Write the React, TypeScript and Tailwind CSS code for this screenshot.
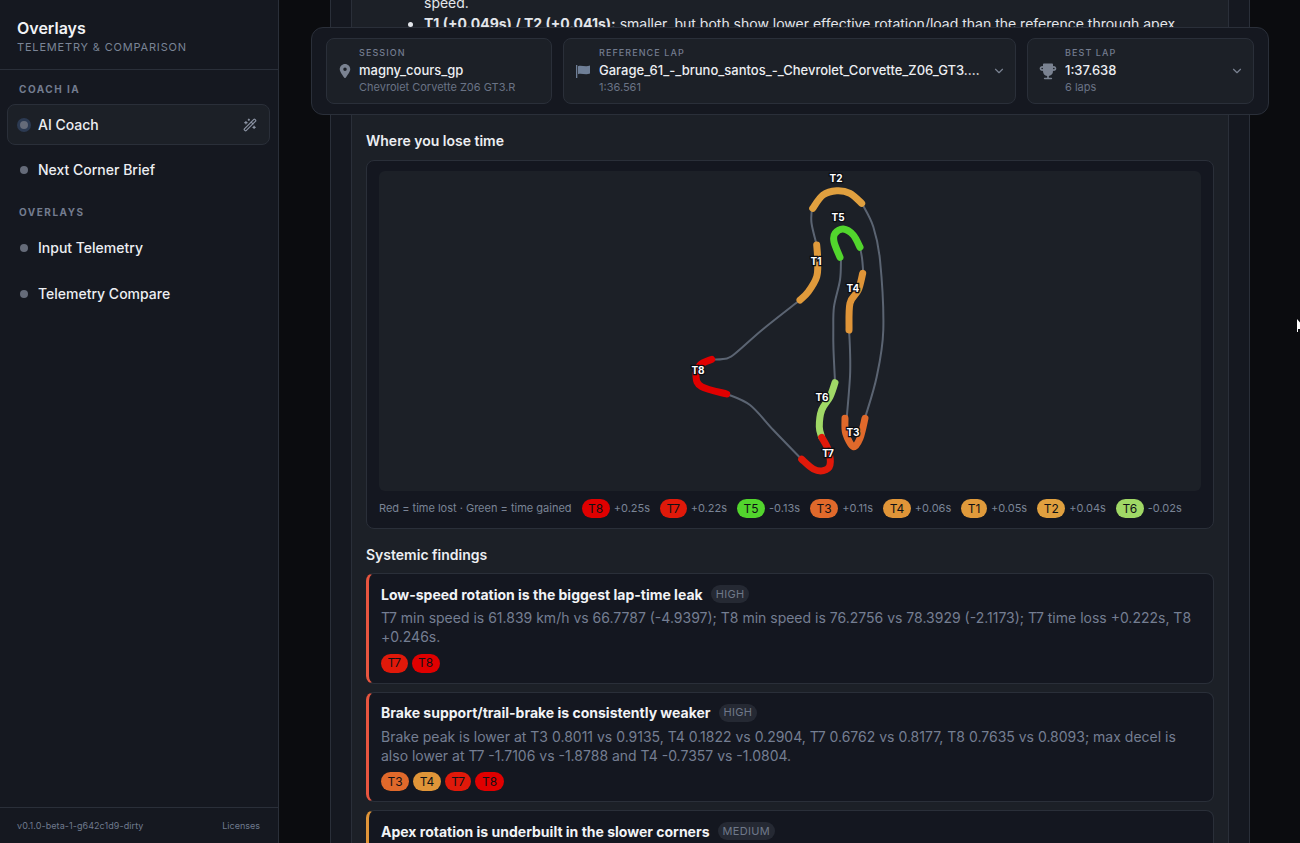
import React from "react";
import { ChevronDown, WandSparkles } from "lucide-react";
import { TbTrophyFilled } from "react-icons/tb";
import { FaLocationDot } from "react-icons/fa6";

type P = [number, number];
const OX = 379;
const OY = 171;

function curve(pts: P[]): string {
  const p = pts.map(([x, y]) => [x - OX, y - OY] as P);
  let d = `M${p[0][0].toFixed(1)} ${p[0][1].toFixed(1)}`;
  for (let i = 0; i < p.length - 1; i++) {
    const a = p[Math.max(0, i - 1)];
    const b = p[i];
    const c = p[i + 1];
    const e = p[Math.min(p.length - 1, i + 2)];
    const c1: P = [b[0] + (c[0] - a[0]) / 6, b[1] + (c[1] - a[1]) / 6];
    const c2: P = [c[0] - (e[0] - b[0]) / 6, c[1] - (e[1] - b[1]) / 6];
    d += ` C${c1[0].toFixed(1)} ${c1[1].toFixed(1)} ${c2[0].toFixed(1)} ${c2[1].toFixed(1)} ${c[0].toFixed(1)} ${c[1].toFixed(1)}`;
  }
  return d;
}

const C = {
  T1: "#e09a3b",
  T2: "#e0a03f",
  T3: "#e0692b",
  T4: "#e09538",
  T5: "#52d52d",
  T6: "#a0d866",
  T7: "#e0190a",
  T8: "#e00000",
};

const greys: P[][] = [
  [[812, 208], [811.5, 223], [816.7, 245]],
  [[800, 300], [762, 330], [733.3, 355], [723, 359], [712, 359.5]],
  [[727, 394], [750, 405], [773.3, 430], [801.7, 459.3]],
  [[835, 382], [833.5, 350], [833.3, 330], [834, 306.7], [840, 280], [841, 258]],
  [[860, 247], [862, 258], [863.3, 273]],
  [[849, 330], [850, 350], [850, 376.7], [846.7, 418]],
  [[865, 418], [876.7, 376.7], [883.3, 330], [880, 260], [873.3, 226.7], [861.7, 203]],
];

const segs: { c: string; pts: P[] }[] = [
  { c: C.T8, pts: [[711.7, 359.3], [700, 365], [696, 376.7], [701.7, 386.7], [726.7, 394]] },
  { c: C.T2, pts: [[812.7, 208.3], [823, 195], [836.7, 190.7], [850, 193.3], [861.7, 203.3]] },
  { c: C.T1, pts: [[816.7, 245], [817.7, 260], [816.7, 276.7], [808.3, 291.7], [800, 300]] },
  { c: C.T5, pts: [[840, 257.3], [834, 241.7], [835, 233.3], [843.3, 229], [853.3, 235], [860, 247.3]] },
  { c: C.T4, pts: [[862.7, 273.3], [858.3, 290], [850, 303.3], [849, 330]] },
  { c: C.T3, pts: [[845, 418.3], [845.7, 433.3], [853.3, 446.7], [860, 438.3], [865, 418.3]] },
  { c: C.T6, pts: [[821.7, 437.3], [819.3, 426.7], [821.7, 410], [830, 396.7], [835, 382.7]] },
  { c: C.T7, pts: [[801.7, 459.3], [813.3, 469], [823.3, 470.7], [830, 465], [828.3, 450], [821.7, 437.3]] },
];

const labels: [string, number, number][] = [
  ["T2", 836, 178],
  ["T5", 838, 217],
  ["T1", 816, 261],
  ["T4", 853, 288],
  ["T8", 698, 370],
  ["T6", 822, 397],
  ["T3", 853, 432],
  ["T7", 828, 453],
];

function TrackMap() {
  return (
    <svg viewBox="0 0 822 320" className="block w-full h-[320px]">
      {greys.map((g, i) => (
        <path key={i} d={curve(g)} fill="none" stroke="#5b6472" strokeWidth={2} strokeLinecap="round" />
      ))}
      {segs.map((s, i) => (
        <path key={i} d={curve(s.pts)} fill="none" stroke={s.c} strokeWidth={7} strokeLinecap="round" />
      ))}
      {labels.map(([t, x, y]) => (
        <text
          key={t}
          x={x - OX}
          y={y - OY}
          textAnchor="middle"
          dominantBaseline="central"
          fill="#ffffff"
          stroke="#0b0d12"
          strokeWidth={2.5}
          fontSize={10}
          fontWeight={700}
          style={{ paintOrder: "stroke" }}
        >
          {t}
        </text>
      ))}
    </svg>
  );
}

function Dot({ active }: { active?: boolean }) {
  return (
    <span className={`flex items-center justify-center w-[14px] h-[14px] rounded-full shrink-0 ${active ? "bg-[#2c3a52]" : ""}`}>
      <span className="block w-2 h-2 rounded-full bg-[#656b79]" />
    </span>
  );
}

function NavItem({ label, active, extra }: { label: string; active?: boolean; extra?: boolean }) {
  return (
    <div
      className={`flex items-center h-[41px] pl-[9px] pr-[12px] gap-[7px] rounded-lg border ${
        active ? "bg-[#1c2027] border-[#2a2f39]" : "border-transparent"
      }`}
    >
      <Dot active={active} />
      <span className="text-[14px] font-medium text-[#eceef2] flex-1">{label}</span>
      {extra && <WandSparkles size={14} className="text-[#8b93a3]" />}
    </div>
  );
}

function SectionLabel({ children }: { children: React.ReactNode }) {
  return <div className="text-[10px] font-bold tracking-[0.15em] leading-[12px] text-[#737c8f] px-[12px]">{children}</div>;
}

function Sidebar() {
  return (
    <aside className="w-[279px] shrink-0 h-full bg-[#151820] border-r border-[#2a2f39] flex flex-col">
      <div className="h-[70px] border-b border-[#2a2f39] pl-[17px] pt-[18px]">
        <div className="text-[16px] leading-[20px] font-semibold text-[#f1f3f6]">Overlays</div>
        <div className="text-[11px] leading-[14px] mt-[2px] tracking-[0.075em] text-[#7a8496]">TELEMETRY &amp; COMPARISON</div>
      </div>
      <div className="flex-1 pl-[7px] pr-[8px] pt-[13px]">
        <SectionLabel>COACH IA</SectionLabel>
        <div className="mt-[9px] flex flex-col gap-[4px]">
          <NavItem label="AI Coach" active extra />
          <NavItem label="Next Corner Brief" />
        </div>
        <div className="mt-[16px]">
          <SectionLabel>OVERLAYS</SectionLabel>
        </div>
        <div className="mt-[9px] flex flex-col gap-[5px]">
          <NavItem label="Input Telemetry" />
          <NavItem label="Telemetry Compare" />
        </div>
      </div>
      <div className="h-[36px] border-t border-[#2a2f39] pl-[17px] pr-[18px] flex items-center justify-between text-[9px] text-[#6f7a8e]">
        <span className="tracking-[0.008em]">v0.1.0-beta-1-g642c1d9-dirty</span>
        <span>Licenses</span>
      </div>
    </aside>
  );
}

function FlagIcon() {
  return (
    <svg width="14" height="13" viewBox="0 0 14 13" className="text-[#6f7f97]">
      <rect x="0" y="0" width="1.3" height="13" fill="currentColor" />
      <path d="M2 1.2 C5 -0.4 9 2.4 14 0.6 V8.6 C9 10.4 5 7.6 2 9.2 Z" fill="currentColor" />
    </svg>
  );
}

function Selector({
  label,
  value,
  sub,
  icon,
  chevron,
}: {
  label: string;
  value: string;
  sub: string;
  icon: React.ReactNode;
  chevron?: boolean;
}) {
  return (
    <div className="h-[66px] bg-[#1c2027] border border-[#2a2f39] rounded-lg flex items-center pl-[12px] pr-[9px] gap-[9px] min-w-0">
      <div className="shrink-0 flex items-center justify-center text-[#7a8291]">{icon}</div>
      <div className="flex-1 min-w-0">
        <div className="text-[9px] leading-[12px] font-medium tracking-[0.12em] text-[#737c8f]">{label}</div>
        <div className="text-[13px] leading-[18px] mt-[2px] font-medium text-[#eceef2] truncate">{value}</div>
        <div className="text-[11px] leading-[15px] mt-[1px] text-[#6a7385]">{sub}</div>
      </div>
      {chevron && <ChevronDown size={14} className="ml-[3px] shrink-0 text-[#7a8291]" />}
    </div>
  );
}

function TopBar() {
  return (
    <div className="absolute left-[311px] top-[27px] w-[958px] h-[88px] rounded-xl bg-[#151820] border border-[#2a2f39] px-[14px] pt-[10px] grid grid-cols-[226px_1fr_227px] gap-[11px]">
      <Selector
        label="SESSION"
        value="magny_cours_gp"
        sub="Chevrolet Corvette Z06 GT3.R"
        icon={
          <span className="w-[11px] flex justify-center">
            <FaLocationDot size={14} className="shrink-0" />
          </span>
        }
      />
      <Selector
        label="REFERENCE LAP"
        value="Garage_61_-_bruno_santos_-_Chevrolet_Corvette_Z06_GT3.R_-_magny_cours_gp_-_1.36.561.olap"
        sub="1:36.561"
        icon={<FlagIcon />}
        chevron
      />
      <Selector
        label="BEST LAP"
        value="1:37.638"
        sub="6 laps"
        icon={
          <span className="w-[16px] flex justify-center">
            <TbTrophyFilled size={20} className="shrink-0" />
          </span>
        }
        chevron
      />
    </div>
  );
}

function TBadge({ t }: { t: keyof typeof C }) {
  return (
    <span
      className="inline-flex items-center justify-center rounded-full text-[12px] text-[#0f1115] px-[6.5px] h-[19px]"
      style={{ backgroundColor: C[t] }}
    >
      {t}
    </span>
  );
}

const legend: [keyof typeof C, string][] = [
  ["T8", "+0.25s"],
  ["T7", "+0.22s"],
  ["T5", "-0.13s"],
  ["T3", "+0.11s"],
  ["T4", "+0.06s"],
  ["T1", "+0.05s"],
  ["T2", "+0.04s"],
  ["T6", "-0.02s"],
];

function Finding({
  title,
  level,
  body,
  tags,
  medium,
}: {
  title: string;
  level: string;
  body?: string;
  tags?: (keyof typeof C)[];
  medium?: boolean;
}) {
  return (
    <div
      className={`bg-[#141720] border border-[#2a2f39] border-l-[3px] rounded-lg pl-[12px] pr-[14px] pt-[10px] pb-[10px] ${
        medium ? "border-l-[#e09538]" : "border-l-[#e8553f]"
      }`}
    >
      <div className="flex items-center gap-[8px] h-[20px]">
        <span className="text-[14px] font-bold text-[#f1f3f6]">{title}</span>
        <span className="h-[18px] px-[5px] rounded-full bg-[#252933] text-[11px] tracking-[0.03em] text-[#6f7889] flex items-center">{level}</span>
      </div>
      {body && <p className="text-[14px] leading-[19.25px] text-[#747e92] mt-[4px]">{body}</p>}
      {tags && (
        <div className="flex gap-[4px] mt-[7px]">
          {tags.map((t) => (
            <TBadge key={t} t={t} />
          ))}
        </div>
      )}
    </div>
  );
}

function Content() {
  return (
    <div className="w-[920px] ml-[51px] h-full shrink-0 bg-[#151820] border-x border-[#2a2f39] px-[20px] overflow-hidden">
      <div className="h-full bg-[#1c2027] border-x border-[#2a2f39] px-[14px] overflow-hidden">
        <div className="-mt-[8px]">
          <ul className="text-[14px] leading-[21px] text-[#e3e6eb] list-disc pl-[58px] pr-[10px]">
            <li className="list-none">speed.</li>
            <li>
              <b className="font-bold">T1 (+0.049s) / T2 (+0.041s):</b> smaller, but both show lower effective rotation/load than the reference through apex.
            </li>
          </ul>
        </div>
        <h3 className="text-[14px] leading-[20px] font-semibold text-[#eceef2] mt-[97px]">Where you lose time</h3>
        <div className="mt-[9px] h-[369px] bg-[#141720] border border-[#2a2f39] rounded-lg px-[12px] pt-[10px]">
          <div className="rounded-md bg-[#1c2027] h-[320px] overflow-hidden">
            <TrackMap />
          </div>
          <div className="flex items-center h-[19px] mt-[8px] text-[11px] text-[#7a8496]">
            <span className="mr-[10px]">Red = time lost · Green = time gained</span>
            {legend.map(([t, v]) => (
              <span key={t} className="flex items-center gap-[4px] mr-[10px]">
                <TBadge t={t} />
                <span>{v}</span>
              </span>
            ))}
          </div>
        </div>
        <h3 className="text-[14px] leading-[20px] font-semibold text-[#eceef2] mt-[16px]">Systemic findings</h3>
        <div className="mt-[8px] flex flex-col gap-[8px]">
          <Finding
            title="Low-speed rotation is the biggest lap-time leak"
            level="HIGH"
            body="T7 min speed is 61.839 km/h vs 66.7787 (-4.9397); T8 min speed is 76.2756 vs 78.3929 (-2.1173); T7 time loss +0.222s, T8 +0.246s."
            tags={["T7", "T8"]}
          />
          <Finding
            title="Brake support/trail-brake is consistently weaker"
            level="HIGH"
            body="Brake peak is lower at T3 0.8011 vs 0.9135, T4 0.1822 vs 0.2904, T7 0.6762 vs 0.8177, T8 0.7635 vs 0.8093; max decel is also lower at T7 -1.7106 vs -1.8788 and T4 -0.7357 vs -1.0804."
            tags={["T3", "T4", "T7", "T8"]}
          />
          <Finding title="Apex rotation is underbuilt in the slower corners" level="MEDIUM" medium />
        </div>
      </div>
    </div>
  );
}

export default function App() {
  return (
    <div className="relative w-[1300px] h-[843px] overflow-hidden bg-[#0b0c0f] flex" style={{ fontFamily: "Inter, 'Noto Sans', sans-serif" }}>
      <Sidebar />
      <Content />
      <TopBar />
      <svg className="absolute left-[1297px] top-[319px] w-[3px] h-[14px]" viewBox="0 0 3 14">
        <path d="M0 0 L3 3.5 L3 10 L1 10 L1 13 L0 13 Z" fill="#ffffff" />
      </svg>
    </div>
  );
}
